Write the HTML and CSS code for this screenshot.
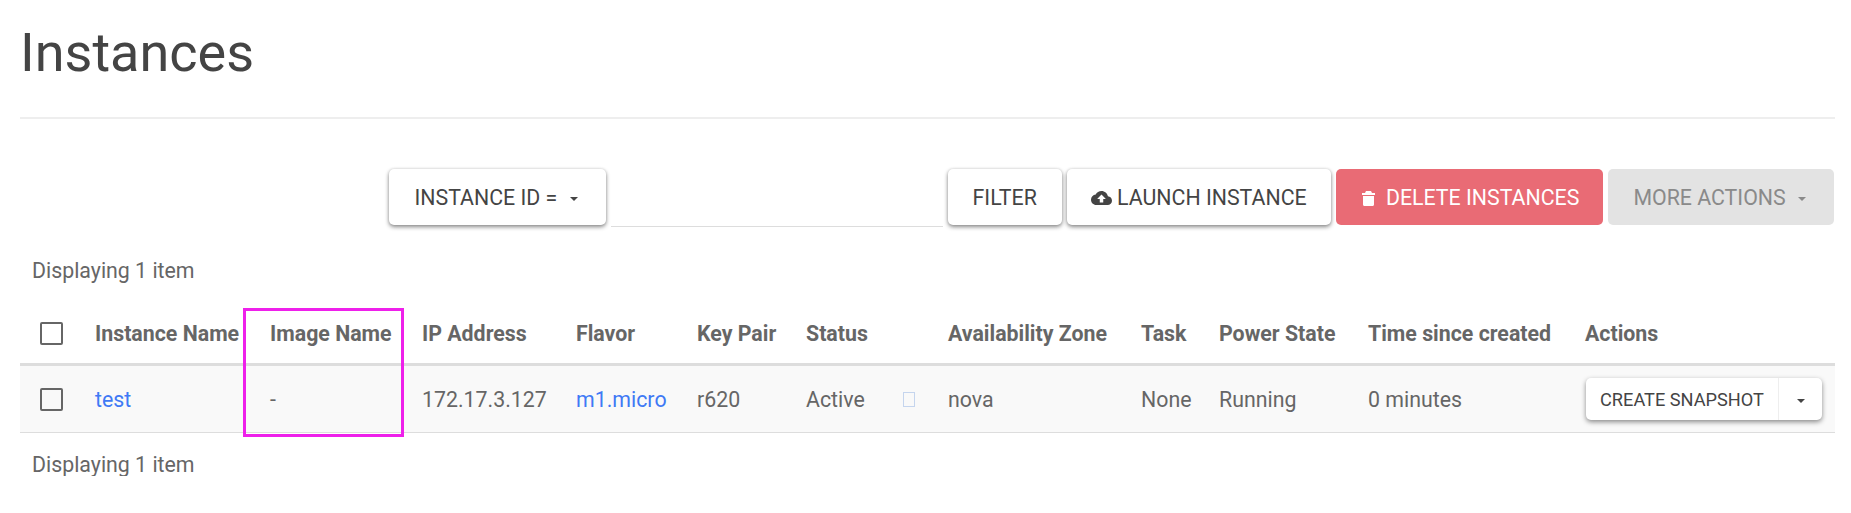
FILE: index.html
```html
<!DOCTYPE html>
<html lang="en">
<head>
  <meta charset="UTF-8" />
  <title>Instances</title>
  <link rel="stylesheet" href="styles.css">
</head>
<body>

  <div class="page-header">
    <h1>Instances</h1>
  </div>

  <div class="toolbar">
    <button class="btn btn-select">INSTANCE ID = <span class="caret"></span></button>
    <div class="filter-input"></div>
    <button class="btn">FILTER</button>
    <button class="btn btn-launch">
      <svg class="icon-cloud" viewBox="0 0 24 16" aria-hidden="true"><path d="M19.35 6.04C18.67 2.59 15.64 0 12 0 9.11 0 6.6 1.64 5.35 4.04 2.34 4.36 0 6.91 0 10c0 3.31 2.69 6 6 6h13c2.76 0 5-2.24 5-5 0-2.64-2.05-4.78-4.65-4.96zM14 9v4h-4V9H7l5-5 5 5h-3z"/></svg>
      LAUNCH INSTANCE
    </button>
    <button class="btn btn-danger">
      <svg class="icon-trash" viewBox="0 0 13 15" aria-hidden="true"><path d="M4 0h5l1 2h3v2H0V2h3zM1 5h11v8.5c0 .9-.6 1.500-1.500 1.500h-8C1.600 15 1 14.400 1 13.500z"/></svg>
      DELETE INSTANCES
    </button>
    <button class="btn btn-select btn-disabled">MORE ACTIONS <span class="caret"></span></button>
  </div>

  <div class="count count-top">Displaying 1 item</div>

  <div class="table-wrap">
    <table class="instances">
      <colgroup>
        <col class="c-check"><col class="c-name"><col class="c-image"><col class="c-ip"><col class="c-flavor"><col class="c-key">
        <col class="c-status"><col class="c-flag"><col class="c-zone"><col class="c-task"><col class="c-power"><col class="c-time"><col class="c-actions">
      </colgroup>
      <thead>
        <tr>
          <th><span class="checkbox"></span></th>
          <th>Instance Name</th>
          <th>Image Name</th>
          <th>IP Address</th>
          <th>Flavor</th>
          <th>Key Pair</th>
          <th>Status</th>
          <th></th>
          <th>Availability Zone</th>
          <th>Task</th>
          <th>Power State</th>
          <th>Time since created</th>
          <th>Actions</th>
        </tr>
      </thead>
      <tbody>
        <tr>
          <td><span class="checkbox"></span></td>
          <td><a href="#">test</a></td>
          <td>-</td>
          <td>172.17.3.127</td>
          <td><a href="#">m1.micro</a></td>
          <td>r620</td>
          <td>Active</td>
          <td><span class="tofu"></span></td>
          <td>nova</td>
          <td>None</td>
          <td>Running</td>
          <td>0 minutes</td>
          <td>
            <div class="split-btn">
              <button class="split-main">CREATE SNAPSHOT</button>
              <button class="split-toggle"><span class="caret"></span></button>
            </div>
          </td>
        </tr>
      </tbody>
    </table>
    <div class="highlight"></div>
  </div>

  <div class="count count-bottom">Displaying 1 item</div>

</body>
</html>
```

FILE: styles.css
```css
body {
  margin: 0;
  padding: 0 16px 0 20px;
  font-family: Roboto, sans-serif;
  font-size: 21.33px;
  color: #666;
  background: #fff;
}

.page-header {
  height: 117px;
  border-bottom: 2px solid #eee;
}

h1 {
  margin: 0;
  padding-top: 20px;
  font-size: 54px;
  font-weight: 400;
  line-height: 66px;
  color: #444;
}

.toolbar {
  display: flex;
  justify-content: flex-end;
  gap: 5px;
  margin-top: 50px;
  padding-right: 1px;
}

.btn {
  height: 56px;
  padding: 0 25px;
  border: none;
  border-radius: 5px;
  background: #fff;
  font-family: inherit;
  font-size: 21.33px;
  color: #444;
  white-space: nowrap;
  box-shadow: 0 2px 4px rgba(0, 0, 0, .45), 0 0 3px rgba(0, 0, 0, .12);
}

.btn-select {
  padding-right: 28px;
}

.btn-launch {
  padding: 0 24px;
}

.btn-danger {
  padding: 0 24px 0 26px;
  background: #e96b75;
  color: #fff;
  box-shadow: none;
}

.btn-disabled {
  background: #e3e3e3;
  color: #8a8a8a;
  box-shadow: none;
}

.caret {
  display: inline-block;
  margin-left: 7px;
  vertical-align: middle;
  border-top: 4px solid;
  border-left: 4px solid transparent;
  border-right: 4px solid transparent;
}

.icon-cloud {
  width: 21px;
  height: 14px;
  fill: #444;
}

.icon-trash {
  width: 13px;
  height: 15px;
  margin-right: 6px;
  fill: #fff;
  vertical-align: -1px;
}

.filter-input {
  width: 332px;
  height: 57px;
  border-bottom: 1px solid #ddd;
}

.count {
  padding-left: 12px;
  line-height: 22px;
}

.count-top {
  margin-top: 33px;
}

.count-bottom {
  margin-top: 21px;
}

.table-wrap {
  position: relative;
  margin-top: 26px;
}

.instances {
  width: 100%;
  table-layout: fixed;
  border-collapse: collapse;
}

.c-check { width: 63px; }
.c-name { width: 175px; }
.c-image { width: 152px; }
.c-ip { width: 154px; }
.c-flavor { width: 121px; }
.c-key { width: 109px; }
.c-status { width: 97px; }
.c-flag { width: 45px; }
.c-zone { width: 193px; }
.c-task { width: 78px; }
.c-power { width: 149px; }
.c-time { width: 217px; }
.c-actions { width: 262px; }

.instances th,
.instances td {
  padding: 0 0 0 12px;
  text-align: left;
  white-space: nowrap;
}

.instances th {
  height: 56px;
  padding-bottom: 4px;
  box-sizing: border-box;
  font-weight: 700;
  border-bottom: 3px solid #ddd;
}

.instances td {
  height: 68px;
  padding-top: 1px;
  box-sizing: border-box;
  background: #f9f9f9;
  border-bottom: 1px solid #ddd;
}

.instances th:first-child,
.instances td:first-child {
  padding-left: 20px;
}

.instances td:last-child {
  padding-left: 13px;
}

.instances a {
  color: #4079f5;
  text-decoration: none;
}

.checkbox {
  display: block;
  box-sizing: border-box;
  width: 23px;
  height: 23px;
  border: 2px solid #666;
  border-radius: 2px;
}

.tofu {
  display: block;
  box-sizing: border-box;
  width: 12px;
  height: 15px;
  border: 1px solid #c5d5ee;
}

.split-btn {
  display: inline-flex;
  height: 42px;
  vertical-align: middle;
  border-radius: 5px;
  background: #fff;
  box-shadow: 0 2px 5px rgba(0, 0, 0, .45);
}

.split-btn button {
  border: none;
  background: none;
  font-family: inherit;
  font-size: 18.2px;
  color: #444;
}

.split-btn .split-main {
  width: 193px;
  padding: 0;
  border-right: 1px solid #eee;
}

.split-btn .split-toggle {
  width: 43px;
  padding: 0;
}

.split-toggle .caret {
  margin-left: 0;
}

.highlight {
  position: absolute;
  left: 223px;
  top: 0;
  width: 155px;
  height: 123px;
  border: 3px solid #ee20ea;
}
```
